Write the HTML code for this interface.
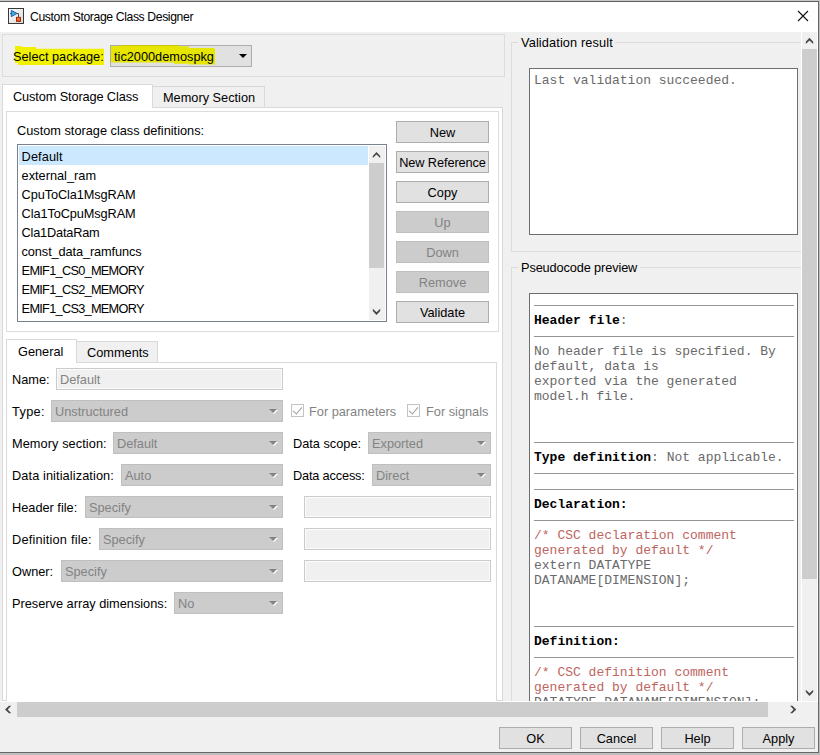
<!DOCTYPE html>
<html>
<head>
<meta charset="utf-8">
<title>Custom Storage Class Designer</title>
<style>
html,body{margin:0;padding:0;}
body{width:820px;height:755px;overflow:hidden;background:#bebebe;font-family:"Liberation Sans",sans-serif;font-size:12.75px;color:#000;}
#win{position:absolute;left:0;top:0;width:819px;height:753px;background:#f0f0f0;overflow:hidden;}
.abs,#win div,#win span,#win svg{position:absolute;box-sizing:border-box;}
.t{white-space:nowrap;line-height:16px;height:17px;padding-top:1px;}
.grp{border:1px solid #dcdcdc;}
.btn{background:#e1e1e1;border:1px solid #adadad;text-align:center;line-height:22px;white-space:nowrap;}
.btn.dis{background:#cccccc;border-color:#bfbfbf;color:#838383;}
.combo{background:#cccccc;border:1px solid #bfbfbf;color:#838383;line-height:19px;padding:1px 0 0 3px;white-space:nowrap;}
.combo:before{content:"";position:absolute;right:4px;top:9px;border-left:4px solid transparent;border-right:4px solid transparent;border-top:4px solid #fff;}
.combo:after{content:"";position:absolute;right:5px;top:8px;border-left:4px solid transparent;border-right:4px solid transparent;border-top:4px solid #838383;}
.edit{background:#f0f0f0;border:1px solid #cbcbcb;box-shadow:inset 0 0 0 1px #fbfbfb;color:#838383;line-height:19px;padding:1px 0 0 3px;white-space:nowrap;}
.lbl{white-space:nowrap;line-height:21px;height:21px;}
.mono{font-family:"Liberation Mono",monospace;font-size:13px;white-space:pre;line-height:15px;color:#6a6a6a;}
.hr{height:1px;background:#939393;left:534px;width:260px;}
.b{font-weight:bold;color:#000;}
.red{color:#bd6560;}
.li{left:19px;width:349px;height:19px;line-height:22px;padding-left:2.6px;white-space:nowrap;}

.dim{color:#838383;}
.cb{width:13px;height:13px;background:#fdfdfd;border:1px solid #c3c3c3;}
.cb:after{content:"";position:absolute;left:3px;top:0px;width:4px;height:8px;border-right:1px solid #a0a0a0;border-bottom:1px solid #a0a0a0;transform:rotate(40deg);}
.sb{background:#f0f0f0;}
.thumb{background:#cdcdcd;}
</style>
</head>
<body>
<div id="win">
  <!-- window frame -->
  <div style="left:0;top:0;width:819px;height:1px;background:#c8c8c8;"></div>
  <div style="left:0;top:1px;width:819px;height:1px;background:#5f5f5f;"></div>
  <div style="left:0;top:2px;width:818px;height:30px;background:#fff;"></div>
  <!-- title icon -->
  <svg style="left:8px;top:8px;" width="16" height="16" viewBox="0 0 16 16">
    <defs><linearGradient id="ig" x1="0" y1="0" x2="1" y2="1"><stop offset="0" stop-color="#ffffff"/><stop offset="1" stop-color="#d8d8d8"/></linearGradient>
    <linearGradient id="rg" x1="0" y1="0" x2="0" y2="1"><stop offset="0" stop-color="#f58a4a"/><stop offset="1" stop-color="#e0501c"/></linearGradient></defs>
    <rect x="0.5" y="0.5" width="15" height="15" fill="url(#ig)" stroke="#383838"/>
    <path d="M2 5.5 H3.5 M9 5.5 H10.5 V9" stroke="#4a4a4a" stroke-width="1" fill="none"/>
    <path d="M3.3 2.3 L9 5.45 L3.3 8.6 Z" fill="#45a8e0" stroke="#1560a5" stroke-width="1" stroke-linejoin="round"/>
    <rect x="8.5" y="9.4" width="4" height="4" fill="url(#rg)" stroke="#a42a08" stroke-width="1"/>
  </svg>
  <span class="t" id="title" style="left:30px;top:8px;font-size:12.2px;letter-spacing:-0.38px;">Custom Storage Class Designer</span>
  <svg style="left:797px;top:10px;" width="12" height="12" viewBox="0 0 12 12"><path d="M1 1 L11 11 M11 1 L1 11" stroke="#111" stroke-width="1.1" fill="none"/></svg>

  <!-- select package group -->
  <div class="grp" style="left:2px;top:34px;width:503px;height:43px;"></div>
  <div style="left:110px;top:45px;width:142px;height:22px;background:#e1e1e1;border:1px solid #adadad;"></div>
  <svg style="left:0;top:40px;" width="260" height="30" viewBox="0 40 260 30">
    <polygon points="15,46 22,46 22,47 36,47 36,48.8 104,48.8 104,65 18,65 18,63 15,63" fill="#f0f000"/>
    <polygon points="111,46 120,46 120,45 179,45 179,46.2 189,46.2 189,48 214,48 215,49.5 215,64.5 189,64.5 189,63.8 174,63.8 174,62.6 111,62.6" fill="#e6e600"/>
    <rect x="120" y="45" width="59" height="1" fill="#c6c614"/>
  </svg>
  <span class="t" id="selpkg" style="left:13px;top:48px;">Select package:</span>
  <span class="t" id="pkg" style="left:114px;top:48px;">tic2000demospkg</span>
  <div style="left:238.5px;top:54px;width:0;height:0;border-left:4px solid transparent;border-right:4px solid transparent;border-top:4px solid #000;"></div>

  <!-- outer tabs -->
  <div style="left:2px;top:107px;width:501px;height:594px;background:#fff;border:1px solid #d9d9d9;"></div>
  <div style="left:152px;top:86px;width:113px;height:22px;background:#f0f0f0;border:1px solid #d9d9d9;"></div>
  <span class="t" id="tab2" style="left:163px;top:89px;">Memory Section</span>
  <div style="left:2px;top:84px;width:151px;height:24px;background:#fff;border:1px solid #d9d9d9;border-bottom:none;"></div>
  <span class="t" id="tab1" style="left:13px;top:88px;letter-spacing:-0.12px;">Custom Storage Class</span>

  <!-- definitions group -->
  <div class="grp" style="left:6px;top:111px;width:493px;height:221px;"></div>
  <span class="t" id="deflbl" style="left:17px;top:122px;">Custom storage class definitions:</span>
  <div style="left:17px;top:144px;width:370px;height:178px;background:#fff;border:1px solid #7a8291;"></div>
  <div class="li" style="top:146px;background:#cce8ff;letter-spacing:0.1px;">Default</div>
  <div class="li" style="top:165px;">external_ram</div>
  <div class="li" style="top:184px;letter-spacing:-0.1px;">CpuToCla1MsgRAM</div>
  <div class="li" style="top:203px;letter-spacing:-0.1px;">Cla1ToCpuMsgRAM</div>
  <div class="li" style="top:222px;letter-spacing:-0.2px;">Cla1DataRam</div>
  <div class="li" style="top:241px;letter-spacing:-0.1px;">const_data_ramfuncs</div>
  <div class="li" style="top:260px;letter-spacing:-0.72px;">EMIF1_CS0_MEMORY</div>
  <div class="li" style="top:279px;letter-spacing:-0.72px;">EMIF1_CS2_MEMORY</div>
  <div class="li" style="top:298px;letter-spacing:-0.72px;">EMIF1_CS3_MEMORY</div>
  <!-- list scrollbar -->
  <div style="left:369px;top:146px;width:16px;height:174px;background:#f0f0f0;"></div>
  <div style="left:369px;top:163px;width:15px;height:105px;background:#cdcdcd;"></div>

  <!-- list buttons -->
  <div class="btn" style="left:396px;top:121px;width:93px;height:22px;">New</div>
  <div class="btn" style="left:396px;top:151px;width:93px;height:22px;letter-spacing:-0.1px;">New Reference</div>
  <div class="btn" style="left:396px;top:181px;width:93px;height:22px;">Copy</div>
  <div class="btn dis" style="left:396px;top:211px;width:93px;height:22px;">Up</div>
  <div class="btn dis" style="left:396px;top:241px;width:93px;height:22px;">Down</div>
  <div class="btn dis" style="left:396px;top:271px;width:93px;height:22px;">Remove</div>
  <div class="btn" style="left:396px;top:301px;width:93px;height:22px;">Validate</div>

  <!-- inner tabs -->
  <div style="left:6px;top:362px;width:491px;height:339px;background:#fff;border:1px solid #d9d9d9;border-bottom:none;"></div>
  <div style="left:76px;top:341px;width:82px;height:22px;background:#f0f0f0;border:1px solid #d9d9d9;"></div>
  <span class="t" id="itab2" style="left:87px;top:344px;">Comments</span>
  <div style="left:6px;top:339px;width:71px;height:24px;background:#fff;border:1px solid #d9d9d9;border-bottom:none;"></div>
  <span class="t" id="itab1" style="left:18px;top:343px;">General</span>

  <span class="lbl" style="left:12px;top:369px;">Name:</span>
  <div class="edit" style="left:56px;top:368px;width:227px;height:22px;">Default</div>

  <span class="lbl" style="left:12px;top:401px;letter-spacing:0.35px;">Type:</span>
  <div class="combo" style="left:51px;top:400px;width:232px;height:22px;">Unstructured</div>
  <div class="cb" style="left:291px;top:404px;"></div>
  <span class="lbl dim" style="left:309px;top:401px;">For parameters</span>
  <div class="cb" style="left:407px;top:404px;"></div>
  <span class="lbl dim" style="left:426px;top:401px;">For signals</span>

  <span class="lbl" style="left:12px;top:433px;letter-spacing:0.08px;">Memory section:</span>
  <div class="combo" style="left:113px;top:432px;width:170px;height:22px;">Default</div>
  <span class="lbl" style="left:293px;top:433px;">Data scope:</span>
  <div class="combo" style="left:368px;top:432px;width:123px;height:22px;">Exported</div>

  <span class="lbl" style="left:12px;top:465px;letter-spacing:0.1px;">Data initialization:</span>
  <div class="combo" style="left:121px;top:464px;width:162px;height:22px;">Auto</div>
  <span class="lbl" style="left:293px;top:465px;letter-spacing:-0.17px;">Data access:</span>
  <div class="combo" style="left:372px;top:464px;width:119px;height:22px;">Direct</div>

  <span class="lbl" style="left:12px;top:497px;">Header file:</span>
  <div class="combo" style="left:85px;top:496px;width:198px;height:22px;">Specify</div>
  <div class="edit" style="left:304px;top:496px;width:187px;height:22px;"></div>

  <span class="lbl" style="left:12px;top:529px;letter-spacing:0.2px;">Definition file:</span>
  <div class="combo" style="left:99px;top:528px;width:184px;height:22px;">Specify</div>
  <div class="edit" style="left:304px;top:528px;width:187px;height:22px;"></div>

  <span class="lbl" style="left:12px;top:561px;">Owner:</span>
  <div class="combo" style="left:61px;top:560px;width:222px;height:22px;">Specify</div>
  <div class="edit" style="left:304px;top:560px;width:187px;height:22px;"></div>

  <span class="lbl" style="left:12px;top:593px;">Preserve array dimensions:</span>
  <div class="combo" style="left:174px;top:592px;width:109px;height:22px;">No</div>

  <!-- right panel -->
  <div class="grp" style="left:511px;top:42px;width:291px;height:210px;border-right:none;"></div>
  <div style="left:518px;top:34px;width:97px;height:16px;background:#f0f0f0;" id="vlblbg"></div>
  <span class="t" id="vlbl" style="left:521px;top:34px;letter-spacing:0.12px;">Validation result</span>
  <div style="left:529px;top:68px;width:269px;height:167px;background:#fff;border:1px solid #6e6e6e;"></div>
  <span class="mono" style="left:534px;top:73px;">Last validation succeeded.</span>

  <div class="grp" style="left:511px;top:267px;width:291px;height:440px;border-right:none;border-bottom:none;"></div>
  <div style="left:518px;top:259px;width:122px;height:16px;background:#f0f0f0;" id="plblbg"></div>
  <span class="t" id="plbl" style="left:521px;top:259px;letter-spacing:-0.12px;">Pseudocode preview</span>
  <div style="left:529px;top:293px;width:269px;height:420px;background:#fff;border:1px solid #6e6e6e;"></div>

  <div class="hr" style="top:305px;"></div>
  <span class="mono b" style="left:534px;top:313px;">Header file<span style="position:static;font-weight:normal;color:#6a6a6a;">:</span></span>
  <div class="hr" style="top:336px;"></div>
  <span class="mono" style="left:534px;top:344px;">No header file is specified. By
default, data is
exported via the generated
model.h file.</span>
  <div class="hr" style="top:442px;"></div>
  <span class="mono" style="left:534px;top:450px;"><span class="b" style="position:static;">Type definition</span>: Not applicable.</span>
  <div class="hr" style="top:473px;"></div>
  <div class="hr" style="top:489px;"></div>
  <span class="mono b" style="left:534px;top:497px;">Declaration:</span>
  <div class="hr" style="top:520px;"></div>
  <span class="mono" style="left:534px;top:528px;"><span class="red" style="position:static;">/* CSC declaration comment
generated by default */</span>
extern DATATYPE
DATANAME[DIMENSION];</span>
  <div class="hr" style="top:626px;"></div>
  <span class="mono b" style="left:534px;top:634px;">Definition:</span>
  <div class="hr" style="top:657px;"></div>
  <span class="mono" style="left:534px;top:665px;"><span class="red" style="position:static;">/* CSC definition comment
generated by default */</span>
DATATYPE DATANAME[DIMENSION];</span>

  <!-- scrollbars -->
  <div style="left:801px;top:32px;width:17px;height:670px;background:#fff;"></div>
  <div class="sb" style="left:802px;top:32px;width:15px;height:669px;"></div>
  <div class="thumb" style="left:802px;top:49px;width:15px;height:530px;"></div>

  <div style="left:0px;top:701px;width:818px;height:1px;background:#fff;"></div>
  <div class="sb" style="left:0px;top:702px;width:818px;height:50px;"></div>
  <div class="thumb" style="left:17px;top:702px;width:751px;height:15px;"></div>

  <svg style="left:0;top:0;" width="819" height="753" viewBox="0 0 819 753" fill="#454545">
    <polygon points="372.8,155.9 376.5,151.9 380.2,155.9 380.2,158.1 376.5,154.6 372.8,158.1"/>
    <polygon points="372.8,310.9 376.5,314.9 380.2,310.9 380.2,308.7 376.5,312.2 372.8,308.7"/>
    <polygon points="805.8,41.8 809.5,37.8 813.2,41.8 813.2,44.0 809.5,40.5 805.8,44.0"/>
    <polygon points="805.8,692.0 809.5,696.0 813.2,692.0 813.2,689.8 809.5,693.3 805.8,689.8"/>
    <polygon points="9.0,705.8 5.0,709.5 9.0,713.2 11.2,713.2 7.7,709.5 11.2,705.8"/>
    <polygon points="792.3,705.8 796.3,709.5 792.3,713.2 790.1,713.2 793.6,709.5 790.1,705.8"/>
  </svg>
  <!-- bottom buttons -->
  <div class="btn" style="left:499px;top:727px;width:73px;height:22px;">OK</div>
  <div class="btn" style="left:580px;top:727px;width:73px;height:22px;">Cancel</div>
  <div class="btn" style="left:661px;top:727px;width:73px;height:22px;">Help</div>
  <div class="btn" style="left:742px;top:727px;width:73px;height:22px;">Apply</div>
  <div style="left:818px;top:1px;width:1px;height:752px;background:#666;"></div>
  <div style="left:0;top:752px;width:819px;height:1px;background:#666;"></div>
</div>
</body>
</html>
